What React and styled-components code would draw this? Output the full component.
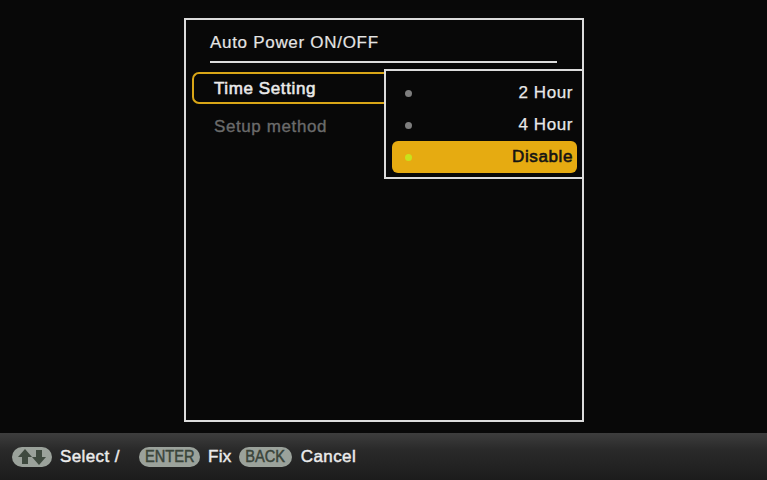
import React from 'react'
import styled, { createGlobalStyle } from 'styled-components'

const Global = createGlobalStyle`
  html, body {
    margin: 0;
    padding: 0;
    background: #080808;
  }
  body {
    font-family: "Liberation Sans", Arial, sans-serif;
    -webkit-font-smoothing: antialiased;
  }
`

const Screen = styled.div`
  width: 767px;
  height: 480px;
  display: flex;
  flex-direction: column;
  background: #080808;
  overflow: hidden;
`

const Stage = styled.main`
  flex: 1;
  display: flex;
  justify-content: center;
  padding-top: 18px;
`

const Panel = styled.section`
  position: relative;
  box-sizing: border-box;
  width: 400px;
  height: 404px;
  margin-left: 1px;
  border: 2px solid #dcdcdc;
  padding: 13px 24px 0 24px;
  display: flex;
  flex-direction: column;
`

const Title = styled.h1`
  margin: 0;
  padding-bottom: 8px;
  border-bottom: 2px solid #dcdcdc;
  width: 347px;
  font-size: 17px;
  font-weight: normal;
  letter-spacing: 0.7px;
  line-height: 20px;
  color: #e4e4e4;
  -webkit-text-stroke: 0.2px #e4e4e4;
`

const Menu = styled.ul`
  list-style: none;
  margin: 9px 0 0 -18px;
  padding: 0;
  display: flex;
  flex-direction: column;
  gap: 6px;
`

const MenuItem = styled.li`
  box-sizing: border-box;
  height: 32px;
  width: 230px;
  display: flex;
  align-items: center;
  padding: 2px 0 0 20px;
  border: 2px solid ${p => (p.$active ? '#d9a617' : 'transparent')};
  border-right: none;
  border-radius: 7px 0 0 7px;
  font-size: 17px;
  letter-spacing: 0.6px;
  color: ${p => (p.$active ? '#eaeaea' : '#6b6b6b')};
  -webkit-text-stroke: ${p => (p.$active ? '0.55px #eaeaea' : '0.35px #6b6b6b')};
`

const Popup = styled.div`
  position: absolute;
  top: 49px;
  right: -2px;
  box-sizing: border-box;
  width: 200px;
  height: 110px;
  border: 2px solid #dcdcdc;
  background: #080808;
  padding: 6px 5px 0 6px;
  display: flex;
  flex-direction: column;
`

const Option = styled.div`
  height: 32px;
  display: flex;
  align-items: center;
  justify-content: space-between;
  padding: 0 4px 0 13px;
  border-radius: 6px;
  background: ${p => (p.$selected ? '#e6ab11' : 'transparent')};
  color: ${p => (p.$selected ? '#141414' : '#e8e8e8')};
  font-size: 17px;
  letter-spacing: 0.6px;
  -webkit-text-stroke: ${p => (p.$selected ? '0.6px #141414' : '0.25px #e8e8e8')};
`

const Dot = styled.span`
  width: 7px;
  height: 7px;
  border-radius: 50%;
  background: ${p => (p.$selected ? '#c9e21c' : '#7e7e7e')};
`

const Footer = styled.footer`
  height: 47px;
  flex-shrink: 0;
  display: flex;
  align-items: center;
  padding-left: 12px;
  background: linear-gradient(#3d3d3d 0%, #2a2a2a 35%, #1c1c1c 100%);
  color: #ececec;
  font-size: 17px;
  letter-spacing: 0.4px;
  -webkit-text-stroke: 0.45px #ececec;
`

const Key = styled.span`
  box-sizing: border-box;
  height: 20px;
  width: ${p => p.$w}px;
  margin-right: ${p => p.$mr || 8}px;
  margin-left: ${p => p.$ml || 0}px;
  display: inline-flex;
  align-items: center;
  justify-content: center;
  border-radius: 10px;
  background: #9ba29b;
  color: #3a443a;
  -webkit-text-stroke: 0.5px #3a443a;
`

const KeyLabel = styled.span`
  display: inline-block;
  font-size: 17px;
  letter-spacing: 0;
  transform: scaleX(0.86);
`

const Arrows = () => (
  <svg width="30" height="18" viewBox="0 0 30 18">
    <path d="M8 1 L15 9 L11 9 L11 16 L5 16 L5 9 L1 9 Z" fill="#3f4a3f" />
    <path d="M22 17 L29 9 L25 9 L25 2 L19 2 L19 9 L15 9 Z" fill="#3f4a3f" />
  </svg>
)

const options = ['2 Hour', '4 Hour', 'Disable']

export default function App() {
  return (
    <Screen>
      <Global />
      <Stage>
        <Panel>
          <Title>Auto Power ON/OFF</Title>
          <Menu>
            <MenuItem $active>Time Setting</MenuItem>
            <MenuItem>Setup method</MenuItem>
          </Menu>
          <Popup>
            {options.map(o => (
              <Option key={o} $selected={o === 'Disable'}>
                <Dot $selected={o === 'Disable'} />
                {o}
              </Option>
            ))}
          </Popup>
        </Panel>
      </Stage>
      <Footer>
        <Key $w={40}><Arrows /></Key>
        Select /
        <Key $w={61} $ml={19}><KeyLabel>ENTER</KeyLabel></Key>
        Fix
        <Key $w={53} $ml={7} $mr={9}><KeyLabel>BACK</KeyLabel></Key>
        Cancel
      </Footer>
    </Screen>
  )
}
